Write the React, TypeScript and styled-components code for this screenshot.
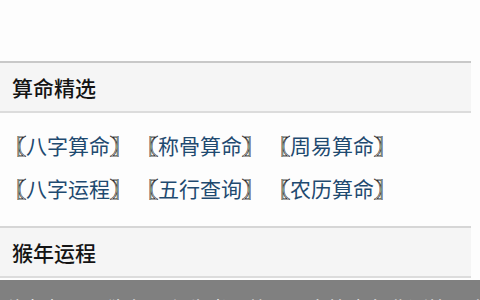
import React from "react";
import styled, { createGlobalStyle } from "styled-components";

const Global = createGlobalStyle`
  html, body { margin: 0; padding: 0; background: #fdfdfd; }
  body { font-family: "Noto Sans CJK SC", "Noto Sans", sans-serif; overflow: hidden; }
`;

const Page = styled.div`
  width: 471px;
  padding-top: 61px;
`;

const Header = styled.div<{ $first?: boolean }>`
  height: 48px;
  display: flex;
  align-items: center;
  padding-left: 12px;
  background: #f5f5f5;
  border-top: 2px solid ${(p) => (p.$first ? "#c8c8c8" : "#d6d6d6")};
  border-bottom: 2px solid #dcdcdc;
  font-size: 21px;
  font-weight: 500;
  color: #141414;
`;

const List = styled.div`
  padding: 10px 0 17px 5px;
  display: flex;
  flex-direction: column;
`;

const Row = styled.div`
  display: flex;
  height: 43px;
  align-items: center;
  gap: 6px;
`;

const Item = styled.a`
  font-size: 21px;
  color: #1f4a70;
  text-decoration: none;
  white-space: nowrap;
`;

const Bracket = styled.span`
  color: #ffffff;
  -webkit-text-stroke: 1.1px #1a1a1a;
  paint-order: stroke fill;
`;

const Overlay = styled.div`
  position: fixed;
  left: 0;
  right: 0;
  top: 280px;
  height: 40px;
  background: #808080;
  color: #ffffff;
  font-size: 20px;
  white-space: nowrap;
  overflow: hidden;
  padding: 15px 0 0 8px;
  box-sizing: border-box;
  line-height: 28px;
`;

const rows = [
  ["八字算命", "称骨算命", "周易算命"],
  ["八字运程", "五行查询", "农历算命"],
];

export default function App() {
  return (
    <>
      <Global />
      <Page>
        <Header $first>算命精选</Header>
        <List>
          {rows.map((r, i) => (
            <Row key={i}>
              {r.map((t) => (
                <Item key={t} href="#">
                  <Bracket>〖</Bracket>
                  {t}
                  <Bracket>〗</Bracket>
                </Item>
              ))}
            </Row>
          ))}
        </List>
        <Header>猴年运程</Header>
      </Page>
      <Overlay>海报提示：猴年运程生肖运势，八字算命免费测算，点击查看详情</Overlay>
    </>
  );
}
